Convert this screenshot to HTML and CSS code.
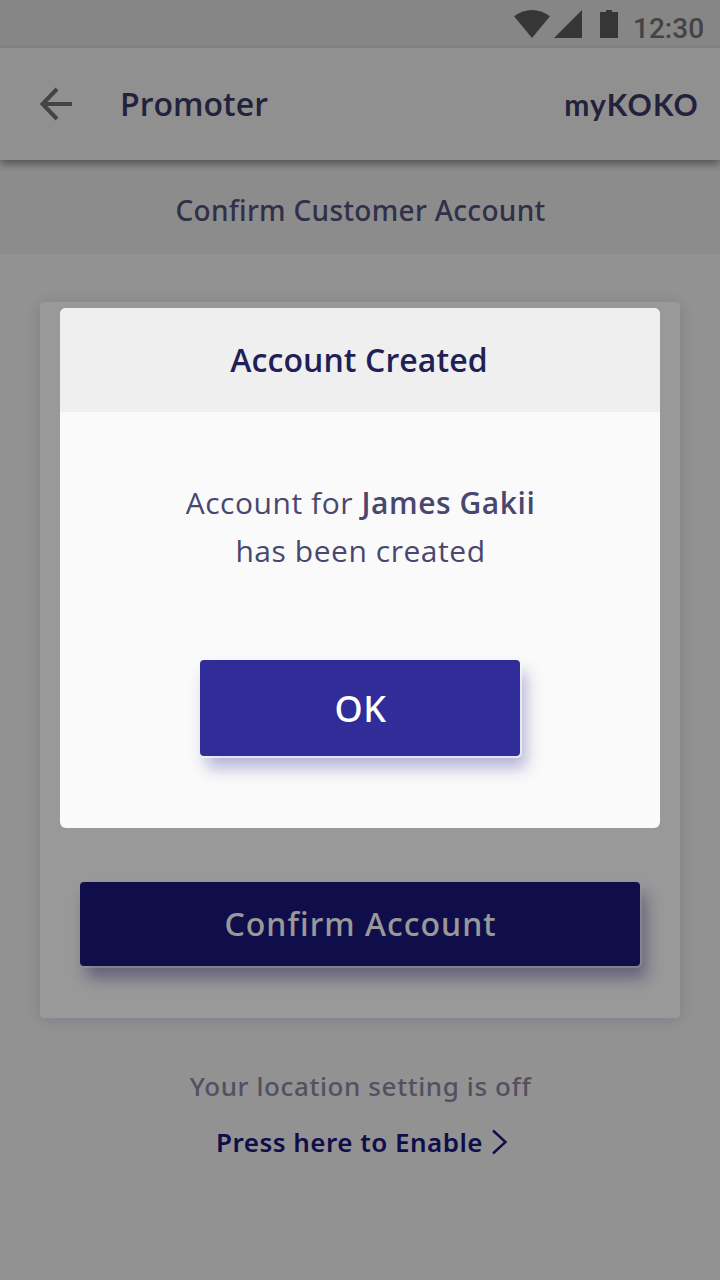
FILE: index.html
```html
<!DOCTYPE html>
<html lang="en">
<head>
<meta charset="utf-8">
<title>myKOKO Promoter</title>
<link rel="stylesheet" href="styles.css">
</head>
<body>
<div class="screen">
  <div class="status-bar">
    <svg class="status-icons" width="106" height="30" viewBox="0 0 106 30">
      <path d="M0 6.2Q18-6 36 6.2L18 28Z"/>
      <path d="M40 28H68V0Z"/>
      <path d="M86 2h6V0h6v2h6v26H86Z"/>
    </svg>
    <span class="clock">12:30</span>
  </div>
  <header class="app-bar">
    <svg class="back" width="34" height="34" viewBox="0 0 34 34"><path d="M32 17H3M17 2L2.5 17L17 32"/></svg>
    <h1 class="title">Promoter</h1>
    <span class="brand">myKOKO</span>
  </header>
  <div class="subheader"><span class="subheader-text">Confirm Customer Account</span></div>
  <main class="content">
    <section class="card">
      <button class="button confirm"><span>Confirm Account</span></button>
    </section>
    <p class="location">Your location setting is off</p>
    <a class="enable"><span>Press here to Enable</span>
      <svg class="chevron" width="18" height="26" viewBox="0 0 18 26"><path d="M2 1.5L14.5 13L2 24.5"/></svg>
    </a>
  </main>
</div>
<div class="scrim">
  <section class="dialog" role="dialog">
    <h2 class="dialog-title"><span>Account Created</span></h2>
    <p class="message"><span class="line1">Account for <b>James Gakii</b></span><br><span>has been created</span></p>
    <button class="button ok"><span>OK</span></button>
  </section>
</div>
</body>
</html>
```

FILE: styles.css
```css
* { box-sizing: border-box; }
body { margin: 0; font-family: "Noto Sans", "Open Sans", sans-serif; font-weight: 500; }
h1, h2, p { margin: 0; font-weight: 500; }
.screen { display: flex; flex-direction: column; height: 1280px; background: #f4f4f4; }
.status-bar { display: flex; justify-content: flex-end; height: 48px; padding: 10px 15px 0 0; background: #e0e0e0; }
.status-icons { fill: #5a5a5a; margin-right: 13px; }
.clock { width: 72px; font: 500 28px/38px Roboto, sans-serif; color: #727272; }
.app-bar { display: flex; align-items: center; height: 112px; padding: 0 21px 0 40px; background: #f0f0f0; box-shadow: 0 4px 8px rgba(0, 0, 0, 0.4); z-index: 1; }
.back { fill: none; stroke: #717171; stroke-width: 4; }
.title { margin-left: 46px; padding-bottom: 2px; font-family: "Open Sans", "Noto Sans", sans-serif; font-size: 32px; font-weight: 600; color: #3b3a66; }
.brand { margin-left: auto; font: 700 30px/40px Lato, sans-serif; letter-spacing: 1.2px; color: #3b3a66; }
.subheader { display: flex; justify-content: center; height: 94px; padding: 30px 0 0 1px; background: #eaeaea; color: #51507a; font-size: 28px; line-height: 40px; letter-spacing: 0.3px; }
.content { display: flex; flex-direction: column; align-items: center; padding-top: 48px; }
.card { display: flex; align-items: flex-end; width: 640px; height: 716px; padding: 0 40px 52px; border-radius: 4px; background: #fff; box-shadow: 0 2px 16px rgba(49, 45, 152, 0.16); }
.button { padding: 0; border: 0; border-radius: 4px; color: #fff; font-family: inherit; font-weight: 500; }
.confirm { width: 560px; height: 84px; padding: 0 0 2px 1px; background: #1c177d; font-size: 32px; letter-spacing: 1.05px; box-shadow: 1px 1px 0 1px rgba(255, 255, 255, 0.5), 6px 12px 16px rgba(28, 23, 125, 0.4); }
.location { margin-top: 48px; padding-left: 1px; font-size: 26px; line-height: 40px; letter-spacing: 0.6px; color: #8a879f; }
.enable { display: flex; align-items: center; gap: 8px; margin-top: 16px; padding-left: 5px; font-size: 26px; line-height: 40px; letter-spacing: 0.48px; font-weight: 600; color: #1c177d; }
.chevron { fill: none; stroke: #1c177d; stroke-width: 2.4; }
.scrim { position: absolute; z-index: 2; inset: 0; display: flex; justify-content: center; align-items: flex-start; padding-top: 308px; background: rgba(0, 0, 0, 0.4); }
.dialog { display: flex; flex-direction: column; align-items: center; width: 600px; height: 520px; overflow: hidden; border-radius: 6px; background: #fafafa; }
.dialog-title { width: 100%; height: 104px; padding-right: 2px; background: #efefef; color: #211f55; font-family: "Open Sans", "Noto Sans", sans-serif; font-size: 32px; font-weight: 600; line-height: 104px; letter-spacing: 0.1px; text-align: center; }
.message { margin-top: 67px; padding-left: 1px; font-family: "Open Sans", "Noto Sans", sans-serif; font-size: 30px; font-weight: 400; line-height: 48px; letter-spacing: 0.55px; text-align: center; color: #49476f; }
.message b { font-weight: 600; }
.ok { width: 320px; height: 96px; margin-top: 85px; padding-left: 1px; background: #312d98; font-size: 36px; letter-spacing: 0.6px; box-shadow: 1px 1px 0 1px rgba(255, 255, 255, 0.6), 6px 12px 16px rgba(49, 45, 152, 0.35); }
```
